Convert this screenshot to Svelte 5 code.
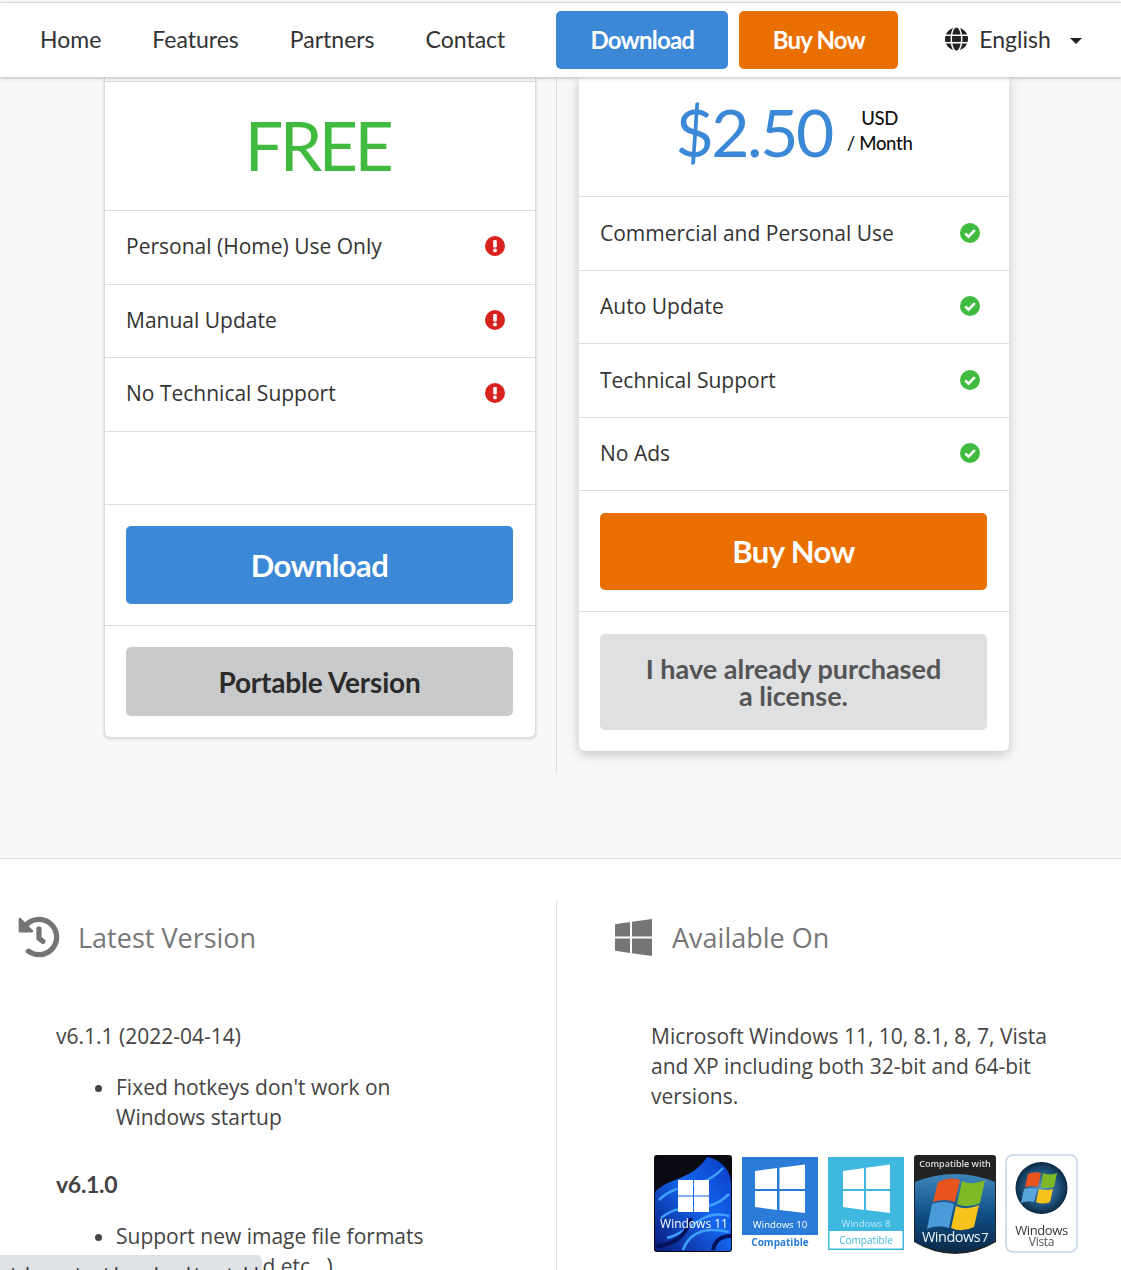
<script>
  const navLinks = ["Home", "Features", "Partners", "Contact"];
  const freeRows = ["Personal (Home) Use Only", "Manual Update", "No Technical Support"];
  const paidRows = ["Commercial and Personal Use", "Auto Update", "Technical Support", "No Ads"];
</script>

<header class="nav">
  <nav class="links">
    {#each navLinks as link}
      <a href="#top">{link}</a>
    {/each}
  </nav>
  <a class="btn nav-btn blue dl" href="#top">Download</a>
  <a class="btn nav-btn orange buy" href="#top">Buy Now</a>
  <div class="lang">
    <svg class="globe" viewBox="0 0 496 512" width="23" height="24">
      <path fill="#222" d="M336.500 160C322 70.700 287.800 8 248 8s-74 62.700-88.500 152h177zM152 256c0 22.200 1.200 43.500 3.300 64h185.300c2.100-20.500 3.300-41.800 3.300-64s-1.200-43.500-3.300-64H155.300c-2.100 20.500-3.300 41.800-3.300 64zm324.700-96c-28.600-67.900-86.500-120.400-158-141.600 24.400 33.800 41.200 84.700 50 141.600h108zM177.200 18.400C105.800 39.600 47.800 92.100 19.300 160h108c8.700-56.900 25.500-107.800 49.900-141.600zM487.400 192H372.700c2.100 21 3.300 42.500 3.300 64s-1.200 43-3.300 64h114.600c5.500-20.500 8.600-41.800 8.600-64s-3.100-43.500-8.500-64zM120 256c0-21.500 1.200-43 3.300-64H8.600C3.200 212.500 0 233.800 0 256s3.200 43.500 8.600 64h114.600c-2-21-3.200-42.500-3.200-64zm39.500 96c14.500 89.300 48.700 152 88.500 152s74-62.700 88.500-152h-177zm159.300 141.600c71.400-21.200 129.400-73.700 158-141.600h-108c-8.800 56.900-25.600 107.800-50 141.600zM19.300 352c28.600 67.900 86.500 120.400 158 141.600-24.400-33.800-41.200-84.700-50-141.600h-108z" />
    </svg>
    <span>English</span>
    <i class="caret"></i>
  </div>
</header>

<section class="pricing">
  <div class="col left">
    <div class="card free">
      <div class="strip"></div>
      <div class="head free-head"><span class="free-label">FREE</span></div>
      {#each freeRows as row}
        <div class="row">
          <span>{row}</span>
          <svg viewBox="0 0 20 20" width="20" height="20">
            <circle cx="10" cy="10" r="10" fill="#d9231f" />
            <rect x="8.2" y="4" width="3.6" height="7.6" rx="1" fill="#fff" />
            <circle cx="10" cy="14.4" r="1.9" fill="#fff" />
          </svg>
        </div>
      {/each}
      <div class="row"></div>
      <div class="action first"><a class="btn big blue" href="#top">Download</a></div>
      <div class="action last"><a class="btn big gray" href="#top">Portable Version</a></div>
    </div>
  </div>
  <div class="col right">
    <div class="card paid">
      <div class="head paid-head">
        <span class="amount">$2.50</span>
        <span class="per"><b>USD</b><b>/ Month</b></span>
      </div>
      {#each paidRows as row}
        <div class="row">
          <span>{row}</span>
          <svg viewBox="0 0 20 20" width="20" height="20">
            <circle cx="10" cy="10" r="10" fill="#40bb3f" />
            <path d="M5.2 10.4l3.3 3.3 6.3-6.5" fill="none" stroke="#fff" stroke-width="2.6" />
          </svg>
        </div>
      {/each}
      <div class="action first"><a class="btn big orange" href="#top">Buy Now</a></div>
      <div class="action last"><a class="btn big light" href="#top">I have already purchased<br />a license.</a></div>
    </div>
  </div>
</section>

<section class="info">
  <div class="info-col latest">
    <h2>
      <svg viewBox="0 0 512 512" width="42" height="42">
        <path fill="#757575" d="M504 255.500c.3 136.600-111.200 248.400-247.800 248.500-59 0-113.200-20.500-155.800-54.900-11.100-8.900-11.900-25.500-1.800-35.600l11.300-11.300c8.600-8.600 22.400-9.600 31.900-2 31.400 24.900 71.100 39.800 114.200 39.800 101.500 0 183.100-82.200 183.100-183.100 0-101.500-82.200-183.100-183.100-183.100-48.700 0-92.900 18.900-125.700 49.800l50.700 50.700c10.100 10.100 2.900 27.300-11.300 27.300H24c-8.800 0-16-7.200-16-16V38.600c0-14.300 17.200-21.400 27.300-11.300l49.400 49.400C129.400 33.900 189.400 8 256 8c136.700 0 247.700 110.900 248 247.500zM323.100 334.300l9.800-12.600c8.100-10.500 6.300-25.500-4.200-33.700L288 256.400V152c0-13.300-10.700-24-24-24h-16c-13.300 0-24 10.700-24 24v135.600l65.400 50.900c10.500 8.100 25.500 6.300 33.700-4.200z" />
      </svg>
      <span>Latest Version</span>
    </h2>
    <div class="log">
      <p>v6.1.1 (2022-04-14)</p>
      <ul><li>Fixed hotkeys don't work on Windows startup</li></ul>
      <p class="ver">v6.1.0</p>
      <ul class="second"><li>Support new image file formats (.webp, .avif and etc...)</li></ul>
    </div>
  </div>
  <div class="info-col avail">
    <h2>
      <svg viewBox="0 0 37 37" width="37" height="37">
        <path fill="#757575" d="M0 5.200l15-2.100v14.500H0zM17 2.800L37 0v17.600H17zM0 19.500h15v14.400l-15-2.100zM17 19.500h20V37l-20-2.800z" />
      </svg>
      <span>Available On</span>
    </h2>
    <p class="desc">Microsoft Windows 11, 10, 8.1, 8, 7, Vista and XP including both 32-bit and 64-bit versions.</p>
    <div class="badges">
      <svg viewBox="0 0 80 100" width="80" height="100">
        <defs>
          <linearGradient id="w11" x1="0" y1="1" x2="1" y2="0">
            <stop offset="0" stop-color="#0a1a7a" />
            <stop offset=".55" stop-color="#1466f0" />
            <stop offset="1" stop-color="#0b3bc0" />
          </linearGradient>
        </defs>
        <rect x="1" y="1" width="78" height="97" rx="3" fill="#0a0a12" />
        <path d="M2 38C14 24 40 26 54 3c14 2 24 14 24 26v66c0 2-1 2-3 2H5c-2 0-3-1-3-3z" fill="url(#w11)" />
        <path d="M6 46c20-20 42-8 64-32M8 64c24-20 44 0 68-24M14 84c22-4 34-30 62-22M30 96c8-22 28-22 46-18" fill="none" stroke="#3fa0ff" stroke-width="2.500" />
        <path d="M4 92c22-2 30-14 34-28M60 96c2-10 8-14 18-14" fill="none" stroke="#07125c" stroke-width="4" />
        <path d="M25 26h15v15.500H25zM41 26h15v15.500H41zM25 42.500h15V58H25zM41 42.500h15V58H41z" fill="#fff" />
        <text x="41" y="74" class="t11">Windows 11</text>
      </svg>
      <svg viewBox="0 0 78 100" width="78" height="100">
        <rect x="1" y="3" width="76" height="78" fill="#2b7cd8" />
        <path d="M14 17l22-3v21H14zM38.500 13.700l25.500-3.200V35H38.500zM14 37h22v19l-22-3zM38.500 37H64v22l-25.500-3z" fill="#fff" />
        <text x="39" y="74" class="t10">Windows 10</text>
        <text x="39" y="92" class="c10">Compatible</text>
      </svg>
      <svg viewBox="0 0 78 100" width="78" height="100">
        <rect x="1" y="3" width="76" height="93" fill="#3fb8e0" />
        <rect x="2.500" y="77" width="73" height="17.500" fill="#fff" />
        <path d="M16 17l21-3v21H16zM39 13.700l24-3.200V35H39zM16 37h21v19l-21-3zM39 37h24v22l-24-3z" fill="#fff" />
        <text x="39" y="73" class="t8">Windows 8</text>
        <text x="39" y="90" class="c8">Compatible</text>
      </svg>
      <svg viewBox="0 0 84 100" width="84" height="100">
        <defs>
          <linearGradient id="w7" x1="0" y1="0" x2="0" y2="1">
            <stop offset="0" stop-color="#3d86bb" />
            <stop offset=".55" stop-color="#0f4c80" />
            <stop offset="1" stop-color="#0a2a4a" />
          </linearGradient>
        </defs>
        <path d="M1 4q0-3 3-3h76q3 0 3 3v84q-20 12-41 12T1 88z" fill="#222" />
        <path d="M2 28q40-16 80 0v60q-20 10-40 10T2 88z" fill="url(#w7)" />
        <text x="42" y="13" class="c7">Compatible with</text>
        <path d="M25 28q11-6 22-2l-5 22q-11-4-22 0z" fill="#e8531e" />
        <path d="M49 27q11 5 23-1l-5 23q-12 6-23 1z" fill="#7fb927" />
        <path d="M19 50q11-4 22 0l-5 24q-11-4-22 1z" fill="#4a9bd8" />
        <path d="M43 52q11 5 23-1l-5 22q-12 6-23 1z" fill="#f6c21c" />
        <text x="42" y="88" class="t7">Windows<tspan class="sev" dx="1">7</tspan></text>
      </svg>
      <svg viewBox="0 0 74 100" width="74" height="100">
        <defs>
          <radialGradient id="vista" cx=".5" cy=".5" r=".5">
            <stop offset="0" stop-color="#5d9ac7" />
            <stop offset=".7" stop-color="#1d4f78" />
            <stop offset="1" stop-color="#0c2a44" />
          </radialGradient>
        </defs>
        <rect x="1" y="1" width="71" height="97" rx="7" fill="#fff" stroke="#c5d4ea" stroke-width="1.500" />
        <circle cx="36.500" cy="34" r="26" fill="url(#vista)" />
        <path d="M23 20q6-3 13-1l-3 14q-7-2-13 0z" fill="#e8531e" />
        <path d="M38 19q6 3 14 0l-3 14q-7 2-13 0z" fill="#7fb927" />
        <path d="M19 35q7-2 13 0l-3 13q-7-2-13 1z" fill="#5aa6dc" />
        <path d="M34 35q7 2 14 0l-3 13q-7 3-14 0z" fill="#f6c21c" />
        <text x="36.500" y="81" class="tv">Windows</text>
        <text x="36.500" y="92" class="vv">Vista</text>
      </svg>
    </div>
  </div>
</section>

<div class="status">pick.app/en/download/portable</div>

<style>
  :global(body) {
    height: 1270px;
    overflow: hidden;
    background: #fff;
    font-family: "Open Sans", sans-serif;
    color: #333;
  }

  a {
    text-decoration: none;
    color: inherit;
  }

  .nav {
    position: relative;
    z-index: 2;
    display: flex;
    align-items: center;
    box-sizing: border-box;
    height: 75px;
    margin-top: 2px;
    border-top: 1px solid #ddd;
    background: #fff;
    box-shadow: 0 1px 4px rgba(0, 0, 0, 0.25);
    font-family: Lato, sans-serif;
    font-size: 23px;
  }

  .links {
    display: flex;
    gap: 51px;
    margin-left: 40px;
    margin-top: -2px;
    color: #333;
  }

  .btn {
    display: flex;
    align-items: center;
    justify-content: center;
    box-sizing: border-box;
    border-radius: 5px;
    font-family: Lato, sans-serif;
    font-weight: 700;
    letter-spacing: -0.6px;
    color: #fff;
  }

  .blue { background: #3a88d6; }
  .orange { background: #e96f00; }

  .nav-btn {
    height: 58px;
    padding-bottom: 2px;
    font-size: 24px;
    letter-spacing: -0.8px;
  }

  .dl {
    width: 172px;
    margin-left: 51px;
  }

  .buy {
    width: 159px;
    margin-left: 11px;
  }

  .lang {
    display: flex;
    align-items: center;
    margin-left: 47px;
    color: #333;
  }

  .lang span {
    margin-top: -2px;
  }

  .globe {
    margin-right: 11px;
    margin-top: -2px;
  }

  .caret {
    width: 0;
    height: 0;
    margin-left: 19px;
    margin-top: 2px;
    border: 6px solid transparent;
    border-top: 6px solid #222;
    border-bottom: 0;
  }

  .pricing {
    display: grid;
    grid-template-columns: 557px 1fr;
    height: 696px;
    padding-bottom: 85px;
    border-bottom: 1px solid #ddd;
    background: #f8f8f8;
  }

  .col.left {
    padding-left: 104px;
    border-right: 1px solid #ddd;
    box-sizing: border-box;
  }

  .col.right {
    padding-left: 22px;
  }

  .card {
    background: #fff;
    border-radius: 0 0 6px 6px;
  }

  .free {
    width: 432px;
    height: 661px;
    box-sizing: border-box;
    border: 1px solid #ddd;
    border-top: 0;
    box-shadow: 0 1px 3px rgba(0, 0, 0, 0.15);
  }

  .strip {
    height: 4px;
    border-bottom: 1px solid #ddd;
    background: #f8f8f8;
  }

  .paid {
    width: 430px;
    height: 674px;
    box-shadow: 0 3px 12px rgba(0, 0, 0, 0.22);
  }

  .head {
    display: flex;
    align-items: center;
    justify-content: center;
    box-sizing: border-box;
    border-bottom: 1px solid #ddd;
  }

  .free-head {
    height: 129px;
    padding: 0 5px 3px 0;
  }

  .free-label {
    font-family: Lato, sans-serif;
    font-size: 68px;
    letter-spacing: -3.5px;
    color: #40bb3f;
  }

  .paid-head {
    height: 120px;
    padding-bottom: 10px;
    gap: 15px;
  }

  .amount {
    font-family: Lato, sans-serif;
    font-size: 66px;
    letter-spacing: -2.5px;
    color: #3a88d6;
  }

  .per {
    display: flex;
    flex-direction: column;
    align-items: center;
    margin-top: -2px;
    font-family: Lato, sans-serif;
    font-size: 18.5px;
    line-height: 25px;
    letter-spacing: -0.3px;
    color: #111;
  }

  .per b {
    font-weight: 500;
  }

  .row {
    display: flex;
    align-items: center;
    justify-content: space-between;
    box-sizing: border-box;
    height: 73.5px;
    padding: 0 29px 1px 21px;
    border-bottom: 1px solid #ddd;
    font-size: 21px;
    color: #333;
  }

  .free .row {
    padding: 0 30px 2px 21px;
  }

  .action {
    box-sizing: border-box;
    padding: 21px 22px 21px 21px;
  }

  .paid .action {
    padding: 22px 22px 0 21px;
  }

  .action.first {
    height: 121px;
    border-bottom: 1px solid #ddd;
  }

  .big {
    font-size: 31px;
  }

  .free .big.blue {
    height: 78px;
  }

  .paid .big.orange {
    height: 77px;
    padding-bottom: 2px;
  }

  .gray {
    height: 69px;
    background: #c9cacc;
    color: #2b2b2b;
    font-size: 28px;
    letter-spacing: -0.2px;
  }

  .light {
    height: 96px;
    background: #dfe0e2;
    color: #555;
    font-size: 27px;
    line-height: 27px;
    letter-spacing: 0;
    text-align: center;
  }

  .info {
    display: grid;
    grid-template-columns: 557px 1fr;
    padding-top: 42px;
    color: #444;
  }

  .info-col.latest {
    border-right: 1px solid #ddd;
    box-sizing: border-box;
    padding-left: 18px;
  }

  .info-col.avail {
    padding-left: 58px;
  }

  h2 {
    display: flex;
    align-items: center;
    height: 72px;
    margin: 0;
    font-size: 27px;
    font-weight: 400;
    color: #777;
  }

  .latest h2 span {
    margin-left: 18px;
  }

  .avail h2 span {
    margin-left: 20px;
  }

  .log {
    margin-top: 48px;
    padding-left: 38px;
    width: 370px;
    font-size: 21px;
    line-height: 30px;
  }

  p {
    margin: 0;
  }

  ul {
    margin: 21px 0 0;
    padding-left: 60px;
  }

  ul.second {
    margin-top: 22px;
  }

  .ver {
    margin-top: 37px;
    font-family: Lato, sans-serif;
    font-size: 23px;
    font-weight: 700;
    letter-spacing: -0.3px;
  }

  .desc {
    width: 420px;
    margin-top: 48px;
    margin-left: 36px;
    font-size: 21px;
    line-height: 30px;
  }

  .badges {
    display: flex;
    gap: 8px;
    align-items: center;
    margin-top: 43px;
    margin-left: 38px;
  }

  .badges svg {
    flex: none;
    filter: blur(0.5px);
  }

  text {
    font-family: "Open Sans", sans-serif;
    text-anchor: middle;
  }

  .t11 { font-size: 12px; fill: #fff; }
  .t10 { font-size: 9.6px; fill: #fff; }
  .c10 { font-size: 10px; font-weight: 700; fill: #2b7cd8; }
  .t8 { font-size: 9.6px; fill: #bdeafa; }
  .c8 { font-size: 10px; fill: #3fb8e0; }
  .c7 { font-size: 9px; font-weight: 600; fill: #ddd; }
  .t7 { font-size: 14.5px; fill: #eef3f8; letter-spacing: -0.5px; }
  .sev { font-size: 13px; }
  .tv { font-size: 13px; fill: #333; letter-spacing: -0.4px; }
  .vv { font-size: 12px; fill: #555; letter-spacing: -0.3px; }

  .status {
    position: absolute;
    left: 0;
    top: 1255px;
    z-index: 3;
    box-sizing: border-box;
    width: 262px;
    height: 15px;
    overflow: hidden;
    border-top-right-radius: 5px;
    background: #dee1e6;
    font-family: Roboto, sans-serif;
    font-size: 19px;
    line-height: 39px;
    white-space: nowrap;
    color: #333;
  }
</style>
